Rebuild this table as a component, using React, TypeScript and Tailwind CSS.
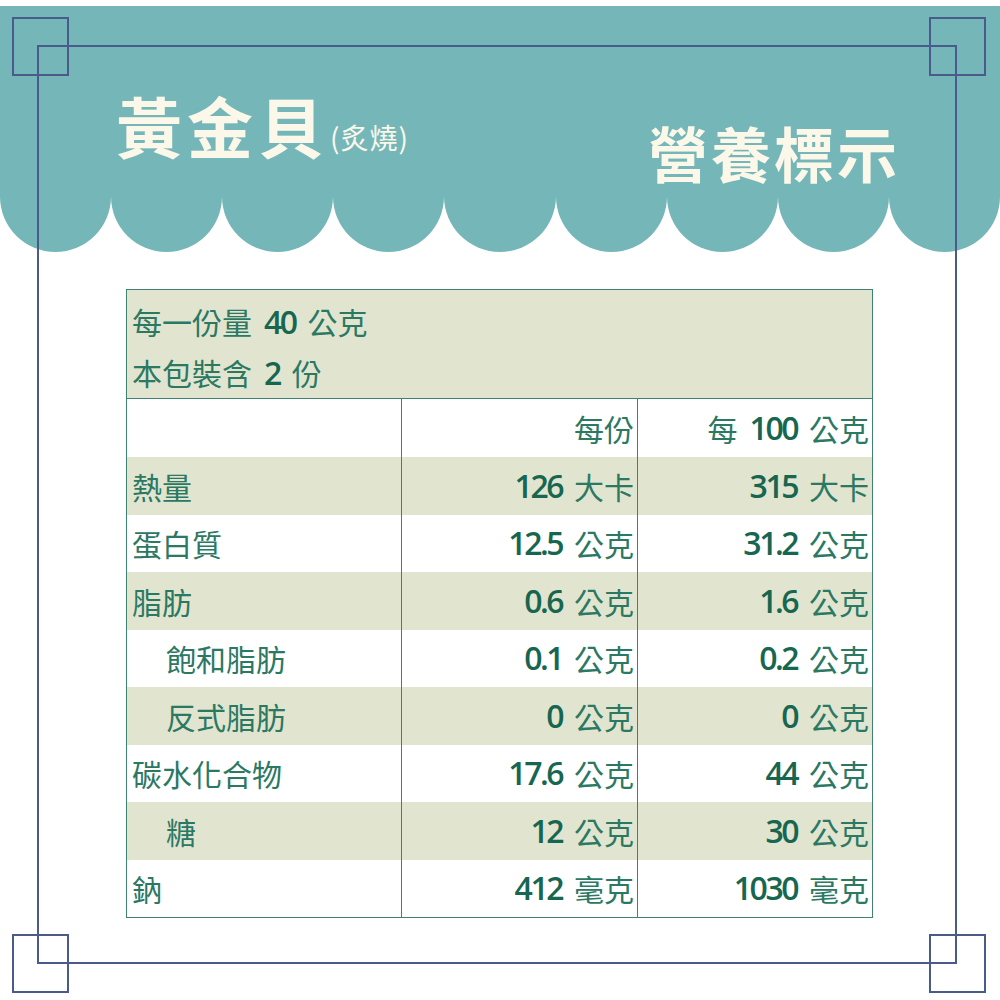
import React from "react";

const CJK = "font-['Noto_Sans_CJK_TC','Noto_Sans_CJK_SC',sans-serif]";
const NUM = "font-['Open_Sans',sans-serif] font-semibold text-[32px] tracking-[-2.5px] text-[#17664f]";

type Row = { label: string; indent?: boolean; a: string; au: string; b: string; bu: string; shade: boolean };

const rows: Row[] = [
  { label: "熱量", a: "126", au: "大卡", b: "315", bu: "大卡", shade: true },
  { label: "蛋白質", a: "12.5", au: "公克", b: "31.2", bu: "公克", shade: false },
  { label: "脂肪", a: "0.6", au: "公克", b: "1.6", bu: "公克", shade: true },
  { label: "飽和脂肪", indent: true, a: "0.1", au: "公克", b: "0.2", bu: "公克", shade: false },
  { label: "反式脂肪", indent: true, a: "0", au: "公克", b: "0", bu: "公克", shade: true },
  { label: "碳水化合物", a: "17.6", au: "公克", b: "44", bu: "公克", shade: false },
  { label: "糖", indent: true, a: "12", au: "公克", b: "30", bu: "公克", shade: true },
  { label: "鈉", a: "412", au: "毫克", b: "1030", bu: "毫克", shade: false },
];

function Val({ n, u }: { n: string; u: string }) {
  return (
    <span className="whitespace-nowrap flex items-center">
      <span className={NUM}>{n}</span>
      <span className="ml-[12px]">{u}</span>
    </span>
  );
}

export default function App() {
  return (
    <div className={`relative w-[1000px] h-[1000px] bg-white overflow-hidden ${CJK}`}>
      {/* awning */}
      <div className="pt-[6px]">
        <div className="h-[190px] bg-[#75b7b9] flex justify-between text-[#fbf7e9]">
          <div className="flex items-end pl-[116px] pt-[85px] self-start">
            <span className="text-[66px] leading-none font-bold tracking-[5px]">黃金貝</span>
            <span className="text-[28px] leading-none mb-[6px] ml-[1px] tracking-[1px]">(炙燒)</span>
          </div>
          <div className="pr-[100px] pt-[116px] self-start">
            <span className="text-[60px] leading-none font-bold tracking-[3px]">營養標示</span>
          </div>
        </div>
        <div className="flex h-[56px]">
          {Array.from({ length: 9 }).map((_, i) => (
            <div key={i} className="flex-1 bg-[#75b7b9] rounded-b-full" />
          ))}
        </div>
      </div>

      {/* table */}
      <div className="ml-[126px] mt-[37px] w-[747px] border border-[#3f8270] text-[#2b7863] text-[30px]">
        <div className="bg-[#e1e5d0] pt-[6px] pl-[5px] leading-[51px] border-b border-[#3f8270]">
          <div className="flex items-center">
            <span>每一份量</span>
            <span className={`${NUM} mx-[12px]`}>40</span>
            <span>公克</span>
          </div>
          <div className="flex items-center">
            <span>本包裝含</span>
            <span className={`${NUM} mx-[12px]`}>2</span>
            <span>份</span>
          </div>
        </div>
        <div className="flex h-[58px] leading-none">
          <div className="w-[274px]" />
          <div className="w-[236px] border-l border-[#3f8270] flex items-center justify-end pr-[3px]">每份</div>
          <div className="flex-1 border-l border-[#3f8270] flex items-center justify-end pr-[3px]">
            <span>每</span>
            <span className={`${NUM} ml-[12px]`}>100</span>
            <span className="ml-[12px]">公克</span>
          </div>
        </div>
        {rows.map((r, i) => (
          <div key={i} className={`flex h-[57.5px] leading-none ${r.shade ? "bg-[#e1e5d0]" : "bg-white"}`}>
            <div className={`w-[274px] flex items-center ${r.indent ? "pl-[39px]" : "pl-[5px]"}`}>{r.label}</div>
            <div className="w-[236px] border-l border-[#3f8270] flex items-center justify-end pr-[3px]">
              <Val n={r.a} u={r.au} />
            </div>
            <div className="flex-1 border-l border-[#3f8270] flex items-center justify-end pr-[3px]">
              <Val n={r.b} u={r.bu} />
            </div>
          </div>
        ))}
      </div>

      {/* frame overlay */}
      <div className="absolute left-[37px] top-[45px] w-[920px] h-[919px] border-2 border-[#4a5a8b] pointer-events-none" />
      <div className="absolute left-[12px] top-[17px] w-[57px] h-[59px] border-2 border-[#4a5a8b]" />
      <div className="absolute left-[929px] top-[17px] w-[57px] h-[59px] border-2 border-[#4a5a8b]" />
      <div className="absolute left-[12px] top-[934px] w-[57px] h-[59px] border-2 border-[#4a5a8b]" />
      <div className="absolute left-[929px] top-[934px] w-[57px] h-[59px] border-2 border-[#4a5a8b]" />
    </div>
  );
}
